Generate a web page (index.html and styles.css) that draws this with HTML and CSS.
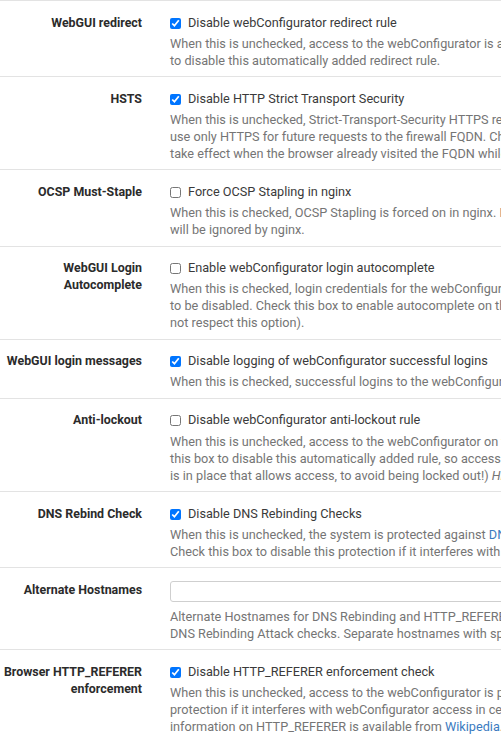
FILE: index.html
```html
<!DOCTYPE html>
<html lang="en">
  <head>
    <meta charset="utf-8" />
    <title>Admin Access</title>
    <meta name="viewport" content="width=device-width, initial-scale=1" />
    <link rel="stylesheet" href="styles.css">
  </head>
  <body>
    <div class="form">
      <div class="form-row">
        <div class="row-label">WebGUI redirect</div>
        <div class="row-body">
          <label class="check"><input type="checkbox" checked /> Disable webConfigurator redirect rule</label>
          <p class="help">When this is unchecked, access to the webConfigurator is always permitted even on port 80, regardless of the listening port configured. Check this box<br>to disable this automatically added redirect rule.</p>
        </div>
      </div>

      <div class="form-row">
        <div class="row-label">HSTS</div>
        <div class="row-body">
          <label class="check"><input type="checkbox" checked /> Disable HTTP Strict Transport Security</label>
          <p class="help">When this is unchecked, Strict-Transport-Security HTTPS response header is sent by the webConfigurator to the browser. This will force the browser to<br>use only HTTPS for future requests to the firewall FQDN. Check this box to disable HSTS. (NOTE: Browser-specific steps are required for disabling to<br>take effect when the browser already visited the FQDN while HSTS was enabled.)</p>
        </div>
      </div>

      <div class="form-row">
        <div class="row-label">OCSP Must-Staple</div>
        <div class="row-body">
          <label class="check"><input type="checkbox" /> Force OCSP Stapling in nginx</label>
          <p class="help">When this is checked, OCSP Stapling is forced on in nginx. Remember to upload your certificate as a full chain, not just the certificate, or this option<br>will be ignored by nginx.</p>
        </div>
      </div>

      <div class="form-row">
        <div class="row-label">WebGUI Login<br>Autocomplete</div>
        <div class="row-body">
          <label class="check"><input type="checkbox" /> Enable webConfigurator login autocomplete</label>
          <p class="help">When this is checked, login credentials for the webConfigurator may be saved by the browser. While convenient, some security standards require this<br>to be disabled. Check this box to enable autocomplete on the login form so that browsers will prompt to save credentials (NOTE: Some browsers do<br>not respect this option).</p>
        </div>
      </div>

      <div class="form-row">
        <div class="row-label">WebGUI login messages</div>
        <div class="row-body">
          <label class="check"><input type="checkbox" checked /> Disable logging of webConfigurator successful logins</label>
          <p class="help">When this is checked, successful logins to the webConfigurator will not be logged.</p>
        </div>
      </div>

      <div class="form-row">
        <div class="row-label">Anti-lockout</div>
        <div class="row-body">
          <label class="check"><input type="checkbox" /> Disable webConfigurator anti-lockout rule</label>
          <p class="help">When this is unchecked, access to the webConfigurator on the LAN interface is always permitted, regardless of the user-defined firewall rule set. Check<br>this box to disable this automatically added rule, so access to the webConfigurator is controlled by the user-defined firewall rules (ensure a firewall rule<br>is in place that allows access, to avoid being locked out!) <i>Hint: the &quot;Set interface(s) IP address&quot; option in the console menu resets this setting as well.</i></p>
        </div>
      </div>

      <div class="form-row">
        <div class="row-label">DNS Rebind Check</div>
        <div class="row-body">
          <label class="check"><input type="checkbox" checked /> Disable DNS Rebinding Checks</label>
          <p class="help">When this is unchecked, the system is protected against <a href="#">DNS Rebinding attacks</a>. This blocks private IP responses from the configured DNS servers.<br>Check this box to disable this protection if it interferes with webConfigurator access or name resolution in the environment.</p>
        </div>
      </div>

      <div class="form-row">
        <div class="row-label">Alternate Hostnames</div>
        <div class="row-body">
          <input type="text" class="text-input" />
          <p class="help help-input">Alternate Hostnames for DNS Rebinding and HTTP_REFERER Checks. Specify alternate hostnames by which the router may be queried, to bypass the<br>DNS Rebinding Attack checks. Separate hostnames with spaces.</p>
        </div>
      </div>

      <div class="form-row">
        <div class="row-label">Browser HTTP_REFERER<br>enforcement</div>
        <div class="row-body">
          <label class="check"><input type="checkbox" checked /> Disable HTTP_REFERER enforcement check</label>
          <p class="help">When this is unchecked, access to the webConfigurator is protected against HTTP_REFERER redirection attempts. Check this box to disable this<br>protection if it interferes with webConfigurator access in certain corner cases such as using external scripts to interact with this system. More<br>information on HTTP_REFERER is available from <a href="#">Wikipedia</a>.</p>
        </div>
      </div>
    </div>
  </body>
</html>
```

FILE: styles.css
```css
html,
body {
  overflow: hidden;
}
body {
  margin: 0;
  width: 501px;
  background: #fff;
  font-family: 'Roboto', 'Liberation Sans', sans-serif;
  font-size: 12.7px;
  line-height: 17px;
  color: #333;
}
.form-row {
  display: grid;
  grid-template-columns: 142px 1fr;
  column-gap: 28px;
  border-top: 1px solid #e3e3e3;
  padding: 12.5px 0 7.5px;
}
.row-label {
  text-align: right;
  font-size: 12.4px;
  font-weight: 700;
  color: #2b2b2b;
  white-space: nowrap;
}
.row-body {
  min-width: 0;
}
.check {
  display: flex;
  align-items: center;
  gap: 7px;
  white-space: nowrap;
  color: #3a3a3a;
}
.check input {
  width: 11px;
  height: 11px;
  margin: 2px 0 0;
}
.help {
  margin: 4.2px 0 0;
  color: #757575;
  white-space: nowrap;
}
.help a {
  color: #3b7bbf;
  text-decoration: none;
}
.text-input {
  display: block;
  box-sizing: border-box;
  width: 600px;
  height: 21px;
  margin: 0;
  border: 1px solid #cfcfcf;
  border-radius: 3px;
}
.help-input {
  margin-top: 6px;
}
```
